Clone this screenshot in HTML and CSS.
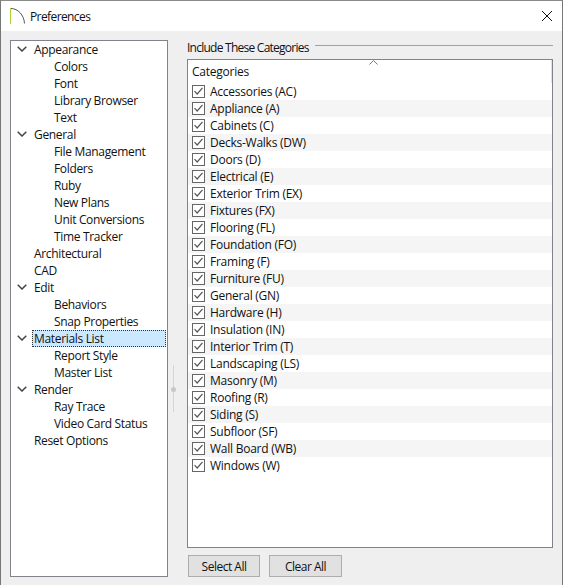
FILE: index.html
```html
<!DOCTYPE html>
<html lang="en">
<head>
<meta charset="utf-8">
<title>Preferences</title>
<link rel="stylesheet" href="styles.css">
</head>
<body>
<div class="window">
  <header class="titlebar">
    <svg class="logo" width="16" height="16" viewBox="0 0 16 16"><path d="M0.5 0V16" stroke="#a9d03f" fill="none"/><path d="M1 0.5C8 0.5 14 7 14.5 15.5" stroke="#555" fill="none"/></svg>
    <span class="title">Preferences</span>
    <svg class="close" width="12" height="12" viewBox="0 0 12 12"><path d="M1 1L11 11M11 1L1 11" stroke="#111" stroke-width="1"/></svg>
  </header>
  <main class="content">
    <ul class="tree">
      <li class="node parent"><svg class="chev" width="10" height="6" viewBox="0 0 10 6"><path d="M0.7 0.7L5 5L9.3 0.7" fill="none" stroke="#444" stroke-width="1.5"/></svg><span>Appearance</span></li>
      <li class="node child"><span>Colors</span></li>
      <li class="node child"><span>Font</span></li>
      <li class="node child"><span>Library Browser</span></li>
      <li class="node child"><span>Text</span></li>
      <li class="node parent"><svg class="chev" width="10" height="6" viewBox="0 0 10 6"><path d="M0.7 0.7L5 5L9.3 0.7" fill="none" stroke="#444" stroke-width="1.5"/></svg><span>General</span></li>
      <li class="node child"><span>File Management</span></li>
      <li class="node child"><span>Folders</span></li>
      <li class="node child"><span>Ruby</span></li>
      <li class="node child"><span>New Plans</span></li>
      <li class="node child"><span>Unit Conversions</span></li>
      <li class="node child"><span>Time Tracker</span></li>
      <li class="node parent"><span>Architectural</span></li>
      <li class="node parent"><span>CAD</span></li>
      <li class="node parent"><svg class="chev" width="10" height="6" viewBox="0 0 10 6"><path d="M0.7 0.7L5 5L9.3 0.7" fill="none" stroke="#444" stroke-width="1.5"/></svg><span>Edit</span></li>
      <li class="node child"><span>Behaviors</span></li>
      <li class="node child"><span>Snap Properties</span></li>
      <li class="node parent selected"><svg class="chev" width="10" height="6" viewBox="0 0 10 6"><path d="M0.7 0.7L5 5L9.3 0.7" fill="none" stroke="#444" stroke-width="1.5"/></svg><span>Materials List</span></li>
      <li class="node child"><span>Report Style</span></li>
      <li class="node child"><span>Master List</span></li>
      <li class="node parent"><svg class="chev" width="10" height="6" viewBox="0 0 10 6"><path d="M0.7 0.7L5 5L9.3 0.7" fill="none" stroke="#444" stroke-width="1.5"/></svg><span>Render</span></li>
      <li class="node child"><span>Ray Trace</span></li>
      <li class="node child"><span>Video Card Status</span></li>
      <li class="node parent"><span>Reset Options</span></li>
    </ul>
    <div class="splitter"><span class="grip"></span></div>
    <section class="panel">
      <div class="legend"><span class="legend-text">Include These Categories</span><span class="rule"></span></div>
      <div class="list">
        <div class="list-head">Categories
          <svg class="sort" width="9" height="5" viewBox="0 0 9 5"><path d="M0.5 4.5L4.5 0.5L8.5 4.5" fill="none" stroke="#777"/></svg>
        </div>
        <div class="row"><span class="box"><svg width="11" height="11" viewBox="0 0 11 11"><path d="M1.5 5.2L4.2 8L9.5 1.8" fill="none" stroke="#555" stroke-width="1.2"/></svg></span>Accessories (AC)</div>
        <div class="row"><span class="box"><svg width="11" height="11" viewBox="0 0 11 11"><path d="M1.5 5.2L4.2 8L9.5 1.8" fill="none" stroke="#555" stroke-width="1.2"/></svg></span>Appliance (A)</div>
        <div class="row"><span class="box"><svg width="11" height="11" viewBox="0 0 11 11"><path d="M1.5 5.2L4.2 8L9.5 1.8" fill="none" stroke="#555" stroke-width="1.2"/></svg></span>Cabinets (C)</div>
        <div class="row"><span class="box"><svg width="11" height="11" viewBox="0 0 11 11"><path d="M1.5 5.2L4.2 8L9.5 1.8" fill="none" stroke="#555" stroke-width="1.2"/></svg></span>Decks-Walks (DW)</div>
        <div class="row"><span class="box"><svg width="11" height="11" viewBox="0 0 11 11"><path d="M1.5 5.2L4.2 8L9.5 1.8" fill="none" stroke="#555" stroke-width="1.2"/></svg></span>Doors (D)</div>
        <div class="row"><span class="box"><svg width="11" height="11" viewBox="0 0 11 11"><path d="M1.5 5.2L4.2 8L9.5 1.8" fill="none" stroke="#555" stroke-width="1.2"/></svg></span>Electrical (E)</div>
        <div class="row"><span class="box"><svg width="11" height="11" viewBox="0 0 11 11"><path d="M1.5 5.2L4.2 8L9.5 1.8" fill="none" stroke="#555" stroke-width="1.2"/></svg></span>Exterior Trim (EX)</div>
        <div class="row"><span class="box"><svg width="11" height="11" viewBox="0 0 11 11"><path d="M1.5 5.2L4.2 8L9.5 1.8" fill="none" stroke="#555" stroke-width="1.2"/></svg></span>Fixtures (FX)</div>
        <div class="row"><span class="box"><svg width="11" height="11" viewBox="0 0 11 11"><path d="M1.5 5.2L4.2 8L9.5 1.8" fill="none" stroke="#555" stroke-width="1.2"/></svg></span>Flooring (FL)</div>
        <div class="row"><span class="box"><svg width="11" height="11" viewBox="0 0 11 11"><path d="M1.5 5.2L4.2 8L9.5 1.8" fill="none" stroke="#555" stroke-width="1.2"/></svg></span>Foundation (FO)</div>
        <div class="row"><span class="box"><svg width="11" height="11" viewBox="0 0 11 11"><path d="M1.5 5.2L4.2 8L9.5 1.8" fill="none" stroke="#555" stroke-width="1.2"/></svg></span>Framing (F)</div>
        <div class="row"><span class="box"><svg width="11" height="11" viewBox="0 0 11 11"><path d="M1.5 5.2L4.2 8L9.5 1.8" fill="none" stroke="#555" stroke-width="1.2"/></svg></span>Furniture (FU)</div>
        <div class="row"><span class="box"><svg width="11" height="11" viewBox="0 0 11 11"><path d="M1.5 5.2L4.2 8L9.5 1.8" fill="none" stroke="#555" stroke-width="1.2"/></svg></span>General (GN)</div>
        <div class="row"><span class="box"><svg width="11" height="11" viewBox="0 0 11 11"><path d="M1.5 5.2L4.2 8L9.5 1.8" fill="none" stroke="#555" stroke-width="1.2"/></svg></span>Hardware (H)</div>
        <div class="row"><span class="box"><svg width="11" height="11" viewBox="0 0 11 11"><path d="M1.5 5.2L4.2 8L9.5 1.8" fill="none" stroke="#555" stroke-width="1.2"/></svg></span>Insulation (IN)</div>
        <div class="row"><span class="box"><svg width="11" height="11" viewBox="0 0 11 11"><path d="M1.5 5.2L4.2 8L9.5 1.8" fill="none" stroke="#555" stroke-width="1.2"/></svg></span>Interior Trim (T)</div>
        <div class="row"><span class="box"><svg width="11" height="11" viewBox="0 0 11 11"><path d="M1.5 5.2L4.2 8L9.5 1.8" fill="none" stroke="#555" stroke-width="1.2"/></svg></span>Landscaping (LS)</div>
        <div class="row"><span class="box"><svg width="11" height="11" viewBox="0 0 11 11"><path d="M1.5 5.2L4.2 8L9.5 1.8" fill="none" stroke="#555" stroke-width="1.2"/></svg></span>Masonry (M)</div>
        <div class="row"><span class="box"><svg width="11" height="11" viewBox="0 0 11 11"><path d="M1.5 5.2L4.2 8L9.5 1.8" fill="none" stroke="#555" stroke-width="1.2"/></svg></span>Roofing (R)</div>
        <div class="row"><span class="box"><svg width="11" height="11" viewBox="0 0 11 11"><path d="M1.5 5.2L4.2 8L9.5 1.8" fill="none" stroke="#555" stroke-width="1.2"/></svg></span>Siding (S)</div>
        <div class="row"><span class="box"><svg width="11" height="11" viewBox="0 0 11 11"><path d="M1.5 5.2L4.2 8L9.5 1.8" fill="none" stroke="#555" stroke-width="1.2"/></svg></span>Subfloor (SF)</div>
        <div class="row"><span class="box"><svg width="11" height="11" viewBox="0 0 11 11"><path d="M1.5 5.2L4.2 8L9.5 1.8" fill="none" stroke="#555" stroke-width="1.2"/></svg></span>Wall Board (WB)</div>
        <div class="row"><span class="box"><svg width="11" height="11" viewBox="0 0 11 11"><path d="M1.5 5.2L4.2 8L9.5 1.8" fill="none" stroke="#555" stroke-width="1.2"/></svg></span>Windows (W)</div>
      </div>
      <div class="buttons">
        <button class="btn btn-select">Select All</button>
        <button class="btn btn-clear">Clear All</button>
      </div>
    </section>
  </main>
</div>
</body>
</html>
```
FILE: styles.css
```css
* { box-sizing: border-box; }
html, body { margin: 0; padding: 0; }
body {
  width: 563px;
  height: 585px;
  overflow: hidden;
  font-family: "Open Sans", "Noto Sans", sans-serif;
  font-size: 12px;
  letter-spacing: -0.25px;
  color: #111;
  background: #efefef;
}
.window {
  height: 585px;
  display: flex;
  flex-direction: column;
  border-top: 1px solid #8a8a8a;
  border-left: 1px solid #777;
  border-right: 1px solid #777;
}
.titlebar {
  height: 30px;
  flex: none;
  background: #fff;
  display: flex;
  align-items: center;
  padding: 0 9px;
}
.logo { flex: none; }
.title { margin-left: 4px; letter-spacing: -0.6px; }
.close { margin-left: auto; }
.content {
  flex: 1;
  display: flex;
  padding: 9px 9px 8px 9px;
}
.tree {
  list-style: none;
  margin: 0;
  padding: 0 1px;
  width: 158px;
  height: 537px;
  flex: none;
  background: #fff;
  border: 1px solid #82828c;
  letter-spacing: -0.33px;
}
.node {
  height: 17px;
  line-height: 16px;
  display: flex;
  align-items: center;
  white-space: nowrap;
}
.parent { padding-left: 22px; position: relative; }
.child { padding-left: 42px; }
.chev { position: absolute; left: 5px; top: 5px; }
.selected {
  background: #cce8ff;
  outline: 1px dotted #333;
  outline-offset: -1px;
  margin-left: 20px;
  padding-left: 2px;
}
.selected .chev { left: -15px; }
.splitter {
  width: 19px;
  flex: none;
  display: flex;
  justify-content: center;
  align-items: center;
}
.grip {
  width: 1px;
  height: 47px;
  margin-left: -9px;
  margin-top: 160px;
  background: #d4d4d4;
  position: relative;
}
.grip::after {
  content: "";
  position: absolute;
  left: -2px;
  top: 22px;
  width: 5px;
  height: 5px;
  border-radius: 50%;
  background: #c8c8c8;
}
.panel {
  flex: 1;
  min-width: 0;
  display: flex;
  flex-direction: column;
}
.legend {
  height: 19px;
  display: flex;
  align-items: center;
  padding-bottom: 4px;
}
.legend-text { letter-spacing: -0.75px; }
.rule {
  flex: 1;
  height: 1px;
  background: #a0a0a0;
  margin: -5px 0 0 6px;
}
.list {
  flex: none;
  height: 489px;
  background: #fff;
  border: 1px solid #82828c;
}
.list-head {
  height: 23px;
  padding: 4px 0 0 4px;
  line-height: 16px;
  position: relative;
  border-right: 1px solid #e2e2e2;
}
.sort { position: absolute; left: 181px; top: 0; }
.row {
  height: 17px;
  display: flex;
  align-items: center;
  padding-left: 4px;
  white-space: nowrap;
}
.row:nth-child(odd) { background: #f5f5f5; }
.box {
  width: 13px;
  height: 13px;
  border: 1px solid #666;
  margin-right: 5px;
  flex: none;
  background: #fff;
}
.box svg { display: block; }
.buttons {
  display: flex;
  gap: 9px;
  padding: 7px 0 0 1px;
}
.btn {
  height: 22px;
  padding: 0;
  font: inherit;
  letter-spacing: -0.5px;
  color: #111;
  background: #e1e1e1;
  border: 1px solid #adadad;
  border-radius: 0;
}
.btn-select { width: 72px; }
.btn-clear { width: 73px; }
```
